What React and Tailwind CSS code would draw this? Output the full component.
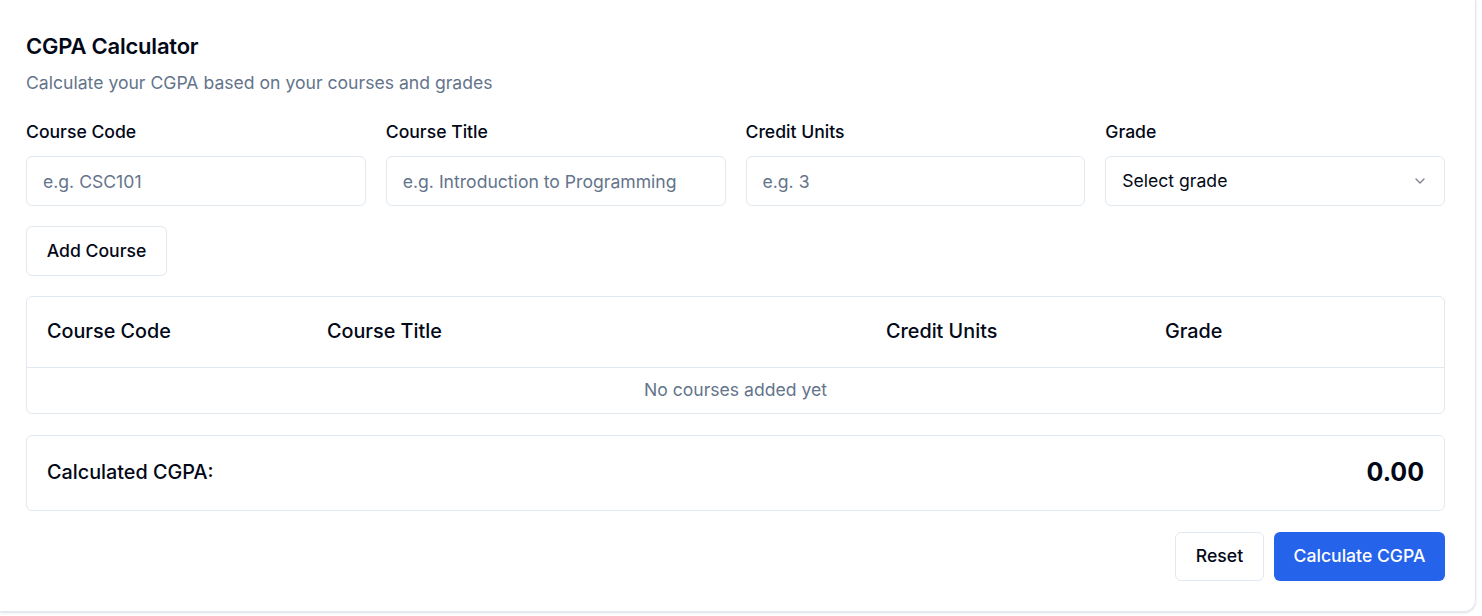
import React, { useState } from 'react';
import { ChevronDown } from 'lucide-react';

const fields = [
  { label: 'Course Code', placeholder: 'e.g. CSC101' },
  { label: 'Course Title', placeholder: 'e.g. Introduction to Programming' },
  { label: 'Credit Units', placeholder: 'e.g. 3' },
];

const App = () => {
  const [courses] = useState([]);

  return (
    <div className="w-[1482px] h-[616px] bg-white text-[#020817]" style={{ fontFamily: 'Inter, "Noto Sans", sans-serif' }}>
      <div className="w-[1476px] h-[612px] border-r border-b border-[#e2e8f0] rounded-br-xl shadow-sm pl-[26px] pr-[30px] pt-8">
        <h2 className="text-[22px] font-semibold leading-7 tracking-[-0.01em]">CGPA Calculator</h2>
        <p className="mt-[11px] text-[17.6px] leading-6 text-[#64748b]">Calculate your CGPA based on your courses and grades</p>

        <div className="mt-[25px] grid grid-cols-4 gap-5">
          {fields.map((f, i) => (
            <div key={i} className="flex flex-col gap-3">
              <label className="text-[17.6px] font-medium leading-6">{f.label}</label>
              <input
                placeholder={f.placeholder}
                className="h-[50px] w-full rounded-md border border-[#e2e8f0] px-4 text-[17.6px] placeholder:text-[#64748b] outline-none"
              />
            </div>
          ))}
          <div className="flex flex-col gap-3">
            <label className="text-[17.6px] font-medium leading-6">Grade</label>
            <button className="h-[50px] w-full rounded-md border border-[#e2e8f0] px-4 flex items-center justify-between text-[17.6px]">
              <span>Select grade</span>
              <ChevronDown size={16} className="opacity-50" />
            </button>
          </div>
        </div>

        <button className="mt-5 h-[50px] w-[141px] rounded-md border border-[#e2e8f0] text-[17.6px] font-medium bg-white">
          Add Course
        </button>

        <div className="mt-5 rounded-md border border-[#e2e8f0]">
          <div className="flex h-[71px] items-center border-b border-[#e2e8f0] text-[19.8px] font-medium">
            <div className="w-[280px] pl-5">Course Code</div>
            <div className="w-[559px] pl-5">Course Title</div>
            <div className="w-[279px] pl-5">Credit Units</div>
            <div className="flex-1 pl-5">Grade</div>
          </div>
          {courses.length === 0 && (
            <div className="h-[45px] flex items-center justify-center text-[17.6px] text-[#64748b]">No courses added yet</div>
          )}
        </div>

        <div className="mt-[21px] h-[76px] rounded-md border border-[#e2e8f0] flex items-center justify-between px-5">
          <span className="text-[19.8px] font-medium">Calculated CGPA:</span>
          <span className="text-[25px] font-bold">0.00</span>
        </div>

        <div className="mt-[21px] flex justify-end gap-[10px]">
          <button className="h-[49px] w-[89px] rounded-md border border-[#e2e8f0] text-[17.6px] font-medium bg-white">Reset</button>
          <button className="h-[49px] w-[171px] rounded-md bg-[#2563eb] text-white text-[17.6px] font-medium">Calculate CGPA</button>
        </div>
      </div>
    </div>
  );
};

export default App;
